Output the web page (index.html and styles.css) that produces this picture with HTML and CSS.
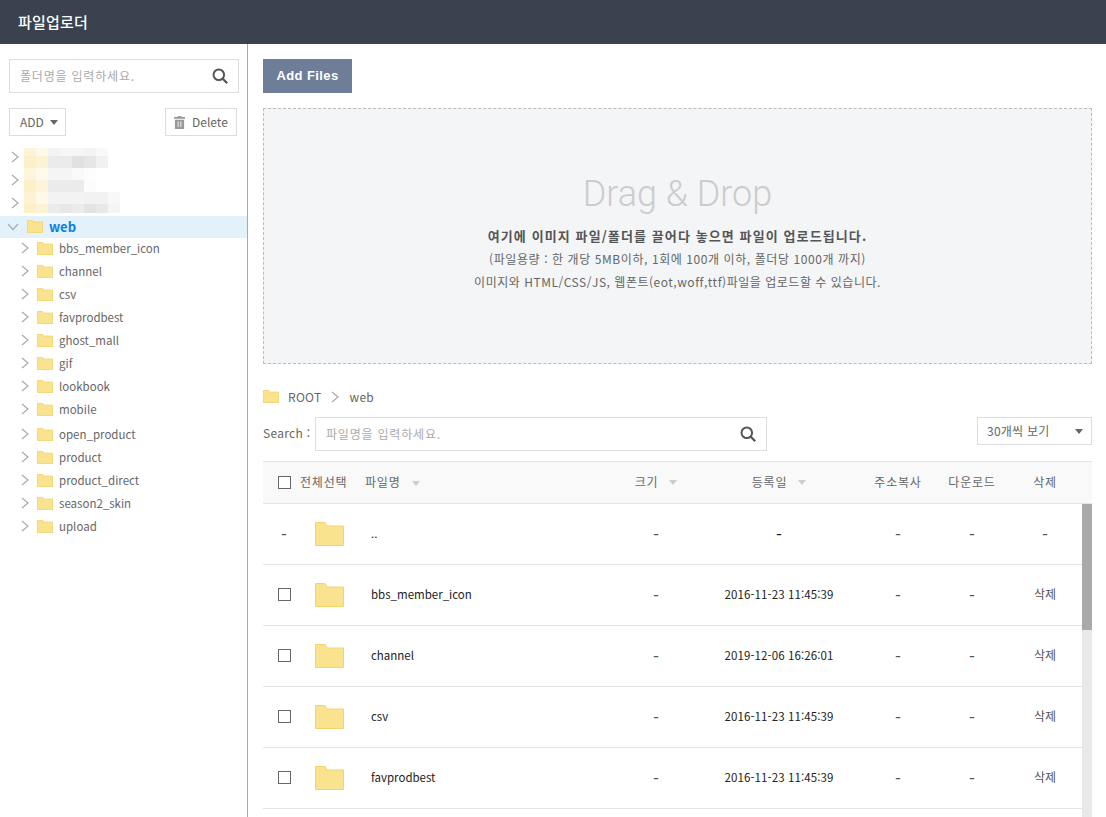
FILE: index.html
```html
<!DOCTYPE html>
<html lang="ko">
<head>
<meta charset="utf-8">
<title>파일업로더</title>
<link rel="stylesheet" href="styles.css">
</head>
<body>
<svg class="defs" width="0" height="0" aria-hidden="true">
  <symbol id="folder" viewBox="0 0 29 24" preserveAspectRatio="none">
    <path d="M.5.5H10L12 4H28.5V23.5H.5Z" fill="#fae38f" stroke="#f4d36b" vector-effect="non-scaling-stroke"/>
  </symbol>
  <symbol id="chev" viewBox="0 0 8 12"><path d="M1 1l6 5-6 5" fill="none" stroke="#aaa" stroke-width="1.2"/></symbol>
  <symbol id="search" viewBox="0 0 16 16"><circle cx="6.8" cy="6.8" r="5.3" fill="none" stroke="#555" stroke-width="2"/><path d="M10.8 10.8l4.4 4.4" stroke="#555" stroke-width="2.2"/></symbol>
</svg>
<header class="topbar">파일업로더</header>
<div class="layout">
  <aside class="sidebar">
    <div class="search side-search"><span class="ph">폴더명을 입력하세요.</span><svg class="search-icon"><use href="#search"/></svg></div>
    <div class="side-actions">
      <button class="btn add-btn">ADD <i class="caret dark"></i></button>
      <button class="btn del-btn">
        <svg class="trash" viewBox="0 0 12 14"><path d="M4 0h4v1h4v2H0V1h4zM1 4h10v10H1zM4 6v6h1V6zM7 6v6h1V6z" fill="#999" fill-rule="evenodd"/></svg>
        Delete
      </button>
    </div>
    <div class="tree">
      <div class="blur-row"><svg class="chev"><use href="#chev"/></svg></div>
      <div class="blur-row"><svg class="chev"><use href="#chev"/></svg></div>
      <div class="blur-row"><svg class="chev"><use href="#chev"/></svg></div>
      <svg class="mosaic" width="96" height="65" viewBox="0 0 8 65" preserveAspectRatio="none" aria-hidden="true">
        <g shape-rendering="crispEdges">
          <rect x="0" width="1" height="8" fill="#fdf3d6"/><rect x="1" width="1" height="8" fill="#fef9e9"/><rect x="2" width="1" height="8" fill="#f3f3f3"/><rect x="3" width="2" height="8" fill="#f6f6f6"/><rect x="5" width="1" height="8" fill="#f4f4f4"/><rect x="6" width="1" height="8" fill="#f9f9f9"/>
          <rect x="0" y="8" width="1" height="12" fill="#fcf0c8"/><rect x="1" y="8" width="1" height="12" fill="#fcf3d3"/><rect x="2" y="8" width="2" height="12" fill="#ebebeb"/><rect x="4" y="8" width="1" height="12" fill="#e1e1e1"/><rect x="5" y="8" width="1" height="12" fill="#e6e6e6"/><rect x="6" y="8" width="1" height="12" fill="#f1f1f1"/>
          <rect x="0" y="20" width="1" height="12" fill="#fdf5dc"/><rect x="1" y="20" width="1" height="12" fill="#fef9ea"/><rect x="2" y="20" width="2" height="12" fill="#f5f5f5"/><rect x="4" y="20" width="1" height="12" fill="#f9f9f9"/><rect x="5" y="20" width="1" height="12" fill="#fdfdfd"/>
          <rect x="0" y="32" width="1" height="12" fill="#fcf0ca"/><rect x="1" y="32" width="1" height="12" fill="#fdf5da"/><rect x="2" y="32" width="3" height="12" fill="#ebebeb"/><rect x="5" y="32" width="1" height="12" fill="#fcfcfc"/>
          <rect x="0" y="44" width="1" height="12" fill="#fdf2d2"/><rect x="1" y="44" width="1" height="12" fill="#fef8e6"/><rect x="2" y="44" width="3" height="12" fill="#f3f3f3"/><rect x="5" y="44" width="2" height="12" fill="#f2f2f2"/><rect x="7" y="44" width="1" height="12" fill="#f8f8f8"/>
          <rect x="0" y="56" width="1" height="9" fill="#fcf0c8"/><rect x="1" y="56" width="1" height="9" fill="#fcf3d3"/><rect x="2" y="56" width="1" height="9" fill="#ebebeb"/><rect x="3" y="56" width="1" height="9" fill="#e7e7e7"/><rect x="4" y="56" width="1" height="9" fill="#ebebeb"/><rect x="5" y="56" width="1" height="9" fill="#e3e3e3"/><rect x="6" y="56" width="1" height="9" fill="#e8e8e8"/><rect x="7" y="56" width="1" height="9" fill="#f5f5f5"/>
        </g>
      </svg>
      <div class="node root-node">
        <svg class="chev-down" viewBox="0 0 12 8"><path d="M1 1l5 5.5L11 1" fill="none" stroke="#aaa" stroke-width="1.2"/></svg>
        <svg class="tree-folder"><use href="#folder"/></svg><b>web</b>
      </div>
      <div class="node"><svg class="chev"><use href="#chev"/></svg><svg class="tree-folder"><use href="#folder"/></svg>bbs_member_icon</div>
      <div class="node"><svg class="chev"><use href="#chev"/></svg><svg class="tree-folder"><use href="#folder"/></svg>channel</div>
      <div class="node"><svg class="chev"><use href="#chev"/></svg><svg class="tree-folder"><use href="#folder"/></svg>csv</div>
      <div class="node"><svg class="chev"><use href="#chev"/></svg><svg class="tree-folder"><use href="#folder"/></svg>favprodbest</div>
      <div class="node"><svg class="chev"><use href="#chev"/></svg><svg class="tree-folder"><use href="#folder"/></svg>ghost_mall</div>
      <div class="node"><svg class="chev"><use href="#chev"/></svg><svg class="tree-folder"><use href="#folder"/></svg>gif</div>
      <div class="node"><svg class="chev"><use href="#chev"/></svg><svg class="tree-folder"><use href="#folder"/></svg>lookbook</div>
      <div class="node"><svg class="chev"><use href="#chev"/></svg><svg class="tree-folder"><use href="#folder"/></svg>mobile</div>
      <div class="node gap"><svg class="chev"><use href="#chev"/></svg><svg class="tree-folder"><use href="#folder"/></svg>open_product</div>
      <div class="node"><svg class="chev"><use href="#chev"/></svg><svg class="tree-folder"><use href="#folder"/></svg>product</div>
      <div class="node"><svg class="chev"><use href="#chev"/></svg><svg class="tree-folder"><use href="#folder"/></svg>product_direct</div>
      <div class="node"><svg class="chev"><use href="#chev"/></svg><svg class="tree-folder"><use href="#folder"/></svg>season2_skin</div>
      <div class="node"><svg class="chev"><use href="#chev"/></svg><svg class="tree-folder"><use href="#folder"/></svg>upload</div>
    </div>
  </aside>
  <main class="main">
    <button class="add-files">Add Files</button>
    <section class="dropzone">
      <h2>Drag &amp; Drop</h2>
      <p class="strong">여기에 이미지 파일/폴더를 끌어다 놓으면 파일이 업로드됩니다.</p>
      <p class="line-two">(파일용량 : 한 개당 5MB이하, 1회에 100개 이하, 폴더당 1000개 까지)</p>
      <p class="line-three">이미지와 HTML/CSS/JS, 웹폰트(eot,woff,ttf)파일을 업로드할 수 있습니다.</p>
    </section>
    <nav class="crumbs">
      <svg class="crumb-folder"><use href="#folder"/></svg><span>ROOT</span>
      <svg class="chev crumb-chev"><use href="#chev"/></svg><span>web</span>
    </nav>
    <div class="toolbar">
      <label class="search-label">Search :</label>
      <div class="search file-search"><span class="ph">파일명을 입력하세요.</span><svg class="search-icon"><use href="#search"/></svg></div>
      <div class="select">30개씩 보기<i class="caret dark"></i></div>
    </div>
    <div class="table">
      <div class="grid-row thead">
        <div class="check-all"><i class="box"></i><span>전체선택</span></div>
        <div class="h-name">파일명<i class="caret"></i></div>
        <div class="cell">크기<i class="caret"></i></div>
        <div class="cell">등록일<i class="caret"></i></div>
        <div class="cell">주소복사</div>
        <div class="cell">다운로드</div>
        <div class="cell">삭제</div>
      </div>
      <div class="tbody">
        <div class="rows">
          <div class="grid-row row">
            <div class="cell dash">-</div><div class="folder-cell"><svg class="big-folder"><use href="#folder"/></svg></div><div class="name">..</div>
            <div class="cell dash">-</div><div class="cell dash date">-</div><div class="cell dash">-</div><div class="cell dash">-</div><div class="cell dash">-</div>
          </div>
          <div class="grid-row row">
            <div class="cell"><i class="box"></i></div><div class="folder-cell"><svg class="big-folder"><use href="#folder"/></svg></div><div class="name">bbs_member_icon</div>
            <div class="cell dash">-</div><div class="cell date">2016-11-23 11:45:39</div><div class="cell dash">-</div><div class="cell dash">-</div><div class="cell">삭제</div>
          </div>
          <div class="grid-row row">
            <div class="cell"><i class="box"></i></div><div class="folder-cell"><svg class="big-folder"><use href="#folder"/></svg></div><div class="name">channel</div>
            <div class="cell dash">-</div><div class="cell date">2019-12-06 16:26:01</div><div class="cell dash">-</div><div class="cell dash">-</div><div class="cell">삭제</div>
          </div>
          <div class="grid-row row">
            <div class="cell"><i class="box"></i></div><div class="folder-cell"><svg class="big-folder"><use href="#folder"/></svg></div><div class="name">csv</div>
            <div class="cell dash">-</div><div class="cell date">2016-11-23 11:45:39</div><div class="cell dash">-</div><div class="cell dash">-</div><div class="cell">삭제</div>
          </div>
          <div class="grid-row row">
            <div class="cell"><i class="box"></i></div><div class="folder-cell"><svg class="big-folder"><use href="#folder"/></svg></div><div class="name">favprodbest</div>
            <div class="cell dash">-</div><div class="cell date">2016-11-23 11:45:39</div><div class="cell dash">-</div><div class="cell dash">-</div><div class="cell">삭제</div>
          </div>
        </div>
        <div class="scrolltrack"><div class="scrollthumb"></div></div>
      </div>
    </div>
  </main>
</div>
</body>
</html>
```
FILE: styles.css
```css
* { box-sizing: border-box; }
html, body { height: 100%; }
body {
  margin: 0;
  overflow: hidden;
  background: #fff;
  color: #666;
  font: 12px/1.4 "Noto Sans CJK KR", "Liberation Sans", sans-serif;
}
.defs { position: absolute; }
i { font-style: normal; }

.topbar {
  height: 44px;
  padding-left: 18px;
  background: #3a4250;
  color: #fff;
  font-size: 15px;
  font-weight: 500;
  line-height: 43px;
  letter-spacing: .2px;
}
.layout { display: flex; height: 773px; }

.sidebar {
  width: 248px;
  flex: none;
  padding: 15px 0 0;
  border-right: 1px solid #aaa;
}
.search {
  display: flex;
  align-items: center;
  justify-content: space-between;
  height: 34px;
  background: #fff;
  border: 1px solid #ddd;
}
.ph { color: #aaa; font-size: 12px; letter-spacing: .8px; }
.search-icon { width: 16px; height: 16px; }
.side-search { width: 230px; margin-left: 9px; padding: 0 10px 0 10px; }
.side-actions {
  display: flex;
  justify-content: space-between;
  margin: 15px 10px 0 9px;
}
.btn {
  display: flex;
  align-items: center;
  height: 28px;
  background: #fff;
  border: 1px solid #ddd;
  color: #666;
  font: inherit;
  padding: 0;
}
.add-btn { width: 57px; padding-left: 10px; }
.del-btn { width: 72px; padding-left: 8px; }
.trash { width: 11px; height: 13px; margin-right: 7px; }
.caret {
  display: inline-block;
  width: 0;
  height: 0;
  margin-left: 11px;
  border: 4.5px solid transparent;
  border-top: 5px solid #ccc;
  border-bottom: 0;
  vertical-align: middle;
}
.caret.dark { border-top-color: #666; margin-left: 6px; }

.tree { position: relative; margin-top: 12px; }
.blur-row { height: 22.67px; padding: 0 0 4px 11px; display: flex; align-items: center; }
.mosaic { position: absolute; left: 24px; top: 0; }
.chev { width: 8px; height: 12px; flex: none; }
.node {
  display: flex;
  align-items: center;
  height: 23px;
  padding-left: 21px;
  color: #666;
  font-size: 11.5px;
}
.node .chev { margin-right: 8px; }
.node.gap { margin-top: 2px; }
.root-node {
  height: 22px;
  padding-left: 7px;
  background: #e3f1fb;
  margin-bottom: -1px;
}
.root-node b { color: #0a7fe0; font-size: 13px; font-weight: 700; }
.chev-down { width: 12px; height: 8px; margin-right: 8px; }
.tree-folder { width: 16px; height: 13px; margin-right: 6px; flex: none; }

.main { flex: 1; min-width: 0; padding: 15px 14px 0 15px; }
.add-files {
  display: block;
  width: 89px;
  height: 34px;
  padding: 0 0 2px;
  border: 0;
  background: #6f7e98;
  color: #fff;
  font: 700 13px "Liberation Sans", sans-serif;
  letter-spacing: .4px;
}
.dropzone {
  height: 256px;
  margin-top: 15px;
  padding-top: 61px;
  background: #f3f5f7;
  border: 1px dashed #bbb;
  text-align: center;
}
.dropzone h2 {
  margin: 0 0 6px;
  color: #ccc;
  font: 300 36px/48px Roboto, sans-serif;
}
.dropzone p { margin: 0; height: 23px; line-height: 23px; }
.dropzone .strong { font-weight: 700; font-size: 13px; color: #555; letter-spacing: 1.1px; }
.dropzone .line-two { letter-spacing: .58px; }
.dropzone .line-three { letter-spacing: .52px; }

.crumbs {
  display: flex;
  align-items: center;
  height: 20px;
  margin-top: 23px;
  letter-spacing: .3px;
}
.crumb-folder { width: 16px; height: 13px; margin-right: 9px; margin-top: -2px; }
.crumb-chev { margin: 0 11px 0 9px; }
.toolbar {
  display: flex;
  align-items: flex-start;
  margin-top: 10px;
}
.search-label { width: 52px; line-height: 32px; letter-spacing: .3px; }
.file-search { width: 452px; padding: 0 10px 0 10px; }
.select {
  display: flex;
  align-items: center;
  justify-content: space-between;
  width: 115px;
  height: 28px;
  margin-left: auto;
  padding: 0 8px 0 9px;
  border: 1px solid #ddd;
  letter-spacing: .25px;
}
.table { margin-top: 10px; }
.grid-row {
  display: grid;
  grid-template-columns: 42px 66px 249px 72px 174px 64px 84px 62px;
  align-items: center;
}
.thead {
  height: 43px;
  padding-right: 16px;
  grid-template-columns: 102px 255px 72px 174px 64px 84px 62px;
  background: #f9f9f9;
  border-top: 1px solid #e4e4e4;
  border-bottom: 1px solid #e4e4e4;
  letter-spacing: .8px;
}
.check-all { display: flex; align-items: center; padding-left: 15px; }
.check-all .box { margin-right: 9px; }
.box {
  display: block;
  width: 13px;
  height: 13px;
  border: 1px solid #666;
  background: #fff;
}
.h-name { white-space: nowrap; }
.cell { display: flex; justify-content: center; align-items: center; white-space: nowrap; }
.tbody { display: flex; height: 313px; overflow: hidden; }
.rows { width: 819px; }
.row { height: 61px; padding-bottom: 2px; border-bottom: 1px solid #e4e4e4; color: #555; }
.folder-cell { display: flex; margin-top: 2px; padding-left: 10px; }
.big-folder { width: 29px; height: 24px; }
.name { color: #222; font-size: 11.5px; }
.date { color: #222; font-size: 11.5px; letter-spacing: .1px; }
.dash { font-size: 17px; line-height: 1; }
.scrolltrack { width: 10px; margin-left: auto; background: #e9e9e9; }
.scrollthumb { height: 126px; background: #a9a9a9; }
```
